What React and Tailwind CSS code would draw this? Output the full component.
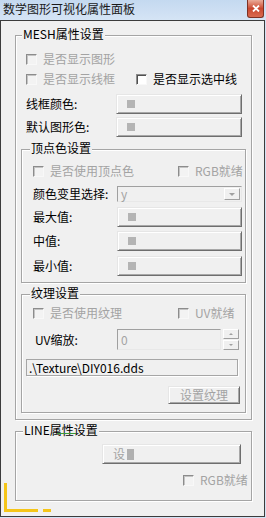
import React from 'react';

const FONT = "font-['Noto_Sans_CJK_SC','Liberation_Sans',sans-serif]";

const Check = ({ label, disabled, className = '' }) => (
  <div className={`flex items-center ${className}`}>
    <span
      className={`w-[11px] h-[11px] shrink-0 border border-t-[#8c8c8c] border-l-[#8c8c8c] border-b-[#f8f8f8] border-r-[#f8f8f8] ${
        disabled ? 'bg-[#f3f3f3] shadow-[inset_1px_1px_0_#c4c4c4]' : 'bg-white shadow-[inset_1px_1px_0_#505050]'
      }`}
    />
    <span className={`ml-[6px] whitespace-nowrap ${disabled ? 'text-[#a3a3a3]' : 'text-black'}`}>{label}</span>
  </div>
);

const ColorBtn = ({ className = '' }) => (
  <div className={`h-[20px] flex items-center pl-[10px] bg-[#f0f0f0] border border-t-[#e6e6e6] border-l-[#e6e6e6] border-b-[#6e6e6e] border-r-[#6e6e6e] shadow-[inset_1px_1px_0_#fff,inset_-1px_-1px_0_#a8a8a8] ${className}`}>
    <span className="w-[8px] h-[8px] bg-[#b4b4b4]" />
  </div>
);

const Group = ({ title, className = '', labelLeft = 'left-[6px]', children }) => (
  <div className={`relative border border-[#a5a5a5] shadow-[inset_1px_1px_0_#fff,1px_1px_0_#fff] ${className}`}>
    <span className={`absolute top-[-9px] ${labelLeft} px-[1px] bg-[#f0f0f0] leading-[14px] whitespace-nowrap`}>{title}</span>
    {children}
  </div>
);

const Row = ({ label, labelW, className = '', children }) => (
  <div className={`flex items-center ${className}`}>
    <span className="whitespace-nowrap" style={{ width: labelW }}>{label}</span>
    {children}
  </div>
);

export default function App() {
  return (
    <div className={`relative w-[266px] h-[518px] bg-[#d3e3f5] flex flex-col overflow-hidden text-[12px] leading-[14px] text-black ${FONT}`}>
      {/* title bar */}
      <div className="h-[20px] shrink-0 flex items-start bg-linear-to-b from-[#c4d9f0] to-[#d5e4f5]">
        <span className="pl-[3px] pt-[2px] text-[12px] leading-[14px] text-[#1a1a1a] whitespace-nowrap">数学图形可视化属性面板</span>
        <div className="ml-auto mr-[2px] w-[17px] h-[18px] flex items-center justify-center rounded-b-[3px] border border-t-0 border-[#7d3124] bg-linear-to-b from-[#e9aa98] via-[#c9472f] to-[#d96a50]">
          <svg width="8" height="7" viewBox="0 0 8 7">
            <path d="M1 0.5 L7 6.5 M7 0.5 L1 6.5" stroke="#fff" strokeWidth="1.8" />
          </svg>
        </div>
      </div>

      {/* client area */}
      <div className="mr-[1px] h-[497px] shrink-0 border border-[#3c3c3c] bg-[#f0f0f0] flex flex-col pl-[14px] pt-[14px]">
        <Group title="MESH属性设置" className="w-[237px] h-[385px] shrink-0 flex flex-col px-[5px]">
          <div className="mt-[13px] h-[20px] flex items-center pl-[5px]">
            <Check label="是否显示图形" disabled />
          </div>
          <div className="h-[20px] flex items-center pl-[5px]">
            <Check label="是否显示线框" disabled className="w-[110px]" />
            <Check label="是否显示选中线" />
          </div>
          <Row label="线框颜色:" labelW={90} className="mt-[5px] h-[20px] pl-[5px]">
            <ColorBtn className="w-[126px]" />
          </Row>
          <Row label="默认图形色:" labelW={90} className="mt-[3px] h-[20px] pl-[5px]">
            <ColorBtn className="w-[126px]" />
          </Row>

          <Group title="顶点色设置" labelLeft="left-[8px]" className="mt-[12px] w-[225px] h-[134px] shrink-0 flex flex-col pl-[11px]">
            <div className="mt-[11px] h-[20px] flex items-center">
              <Check label="是否使用顶点色" disabled className="w-[145px]" />
              <Check label="RGB就绪" disabled />
            </div>
            <Row label="颜色变里选择:" labelW={84} className="mt-[5px] h-[16px]">
              <div className="w-[125px] h-[16px] flex items-center justify-between bg-[#f0f0f0] border border-t-[#a0a0a0] border-l-[#a0a0a0] border-b-[#e8e8e8] border-r-[#e8e8e8]">
                <span className="pl-[3px] text-[#a3a3a3] leading-[12px]">y</span>
                <span className="mr-[1px] w-[16px] h-[12px] flex items-center justify-center bg-[#f0f0f0] border border-t-white border-l-white border-b-[#a0a0a0] border-r-[#a0a0a0]">
                  <svg width="6" height="3" viewBox="0 0 6 3"><path d="M0 0 H6 L3 3 Z" fill="#a0a0a0" /></svg>
                </span>
              </div>
            </Row>
            <Row label="最大值:" labelW={84} className="mt-[5px] h-[20px]">
              <ColorBtn className="w-[125px]" />
            </Row>
            <Row label="中值:" labelW={84} className="mt-[4px] h-[20px]">
              <ColorBtn className="w-[125px]" />
            </Row>
            <Row label="最小值:" labelW={84} className="mt-[5px] h-[20px]">
              <ColorBtn className="w-[125px]" />
            </Row>
          </Group>

          <Group title="纹理设置" labelLeft="left-[8px]" className="mt-[11px] w-[225px] h-[119px] shrink-0 flex flex-col">
            <div className="mt-[8px] h-[20px] flex items-center pl-[11px]">
              <Check label="是否使用纹理" disabled className="w-[145px]" />
              <Check label="UV就绪" disabled />
            </div>
            <Row label="UV缩放:" labelW={82} className="mt-[6px] h-[21px] pl-[13px]">
              <div className="w-[104px] h-[21px] flex items-center bg-[#f0f0f0] border border-t-[#a0a0a0] border-l-[#a0a0a0] border-b-[#e8e8e8] border-r-[#e8e8e8]">
                <span className="pl-[3px] text-[#a3a3a3]">0</span>
              </div>
              <div className="ml-[2px] w-[16px] h-[21px] flex flex-col gap-[1px]">
                <span className="h-[10px] flex items-center justify-center border border-t-white border-l-white border-b-[#a0a0a0] border-r-[#a0a0a0]">
                  <svg width="4" height="2" viewBox="0 0 4 2"><path d="M0 2 H4 L2 0 Z" fill="#a0a0a0" /></svg>
                </span>
                <span className="h-[10px] flex items-center justify-center border border-t-white border-l-white border-b-[#a0a0a0] border-r-[#a0a0a0]">
                  <svg width="4" height="2" viewBox="0 0 4 2"><path d="M0 0 H4 L2 2 Z" fill="#a0a0a0" /></svg>
                </span>
              </div>
            </Row>
            <div className="mt-[9px] ml-[4px] w-[212px] h-[17px] flex items-center bg-[#f0f0f0] border border-[#a6a6a6] shadow-[1px_1px_0_#fff]">
              <span className="pl-[2px] whitespace-nowrap">.\Texture\DIY016.dds</span>
            </div>
            <div className="mt-[10px] ml-[146px] w-[72px] h-[18px] flex items-center justify-center text-[#a3a3a3] bg-[#f0f0f0] border border-t-[#e6e6e6] border-l-[#e6e6e6] border-b-[#6e6e6e] border-r-[#6e6e6e] shadow-[inset_1px_1px_0_#fff,inset_-1px_-1px_0_#a8a8a8]">
              设置纹理
            </div>
          </Group>
        </Group>

        <Group title="LINE属性设置" labelLeft="left-[7px]" className="mt-[11px] w-[237px] h-[70px] shrink-0 flex flex-col">
          <div className="mt-[12px] ml-[86px] w-[139px] h-[20px] flex items-center pl-[10px] text-[#a3a3a3] bg-[#f0f0f0] border border-t-[#e6e6e6] border-l-[#e6e6e6] border-b-[#6e6e6e] border-r-[#6e6e6e] shadow-[inset_1px_1px_0_#fff,inset_-1px_-1px_0_#a8a8a8]">
            <span>设</span>
            <span className="ml-[2px] w-[7px] h-[11px] bg-[#b0b0b0]" />
          </div>
          <div className="mt-[6px] ml-[167px] h-[20px] flex items-center">
            <Check label="RGB就绪" disabled />
          </div>
        </Group>
      </div>

      {/* watermark remains */}
      <div className="absolute left-[57px] top-[433px] w-[19px] h-[1px] bg-[#3a9b3a]" />
      <div className="absolute left-[4px] top-[483px] w-[3px] h-[29px] bg-[#f5c518]" />
      <div className="absolute left-[4px] top-[509px] w-[34px] h-[3px] bg-[#f5c518]" />
      <div className="absolute left-[43px] top-[509px] w-[8px] h-[3px] bg-[#f5c518]" />
    </div>
  );
}
